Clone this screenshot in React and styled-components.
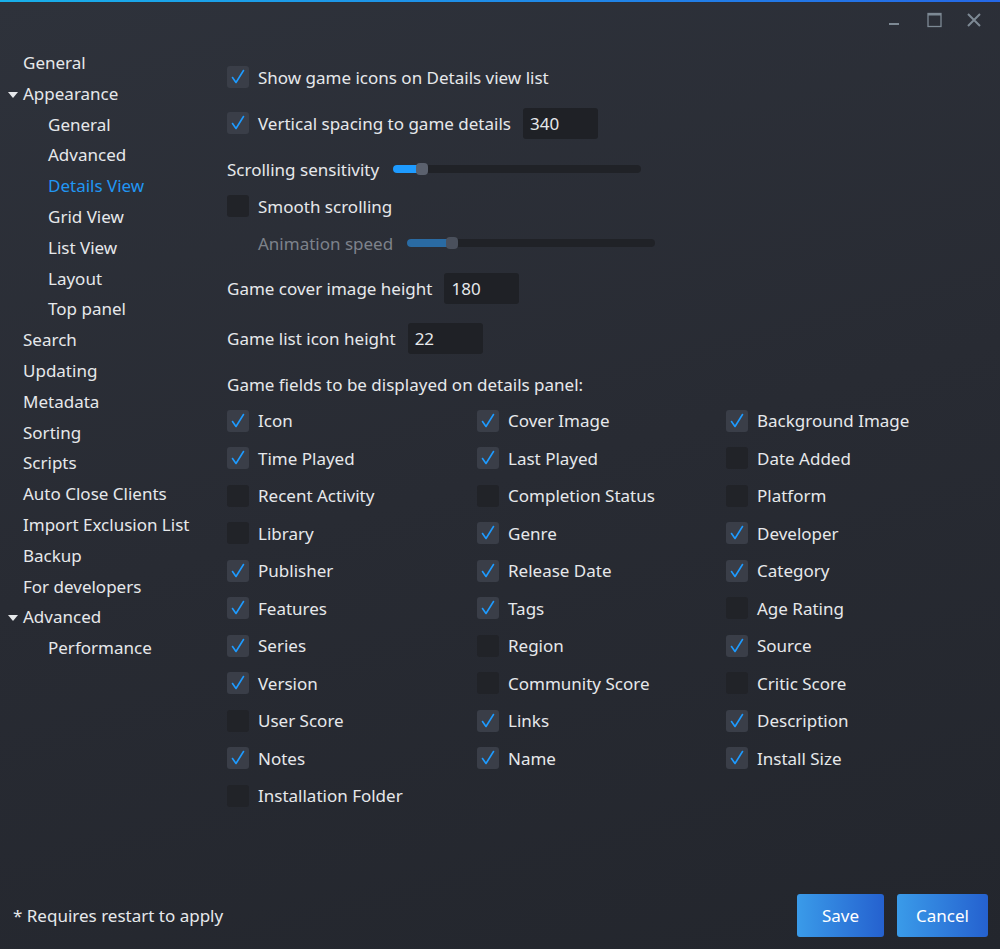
import React from 'react'
import styled, { createGlobalStyle } from 'styled-components'

const GlobalStyle = createGlobalStyle`
  html, body { margin:0; padding:0; }
  body {
    font-family: "Noto Sans", "Open Sans", sans-serif;
    background:#262930;
  }
`

const nav = [
  { label: 'General', level: 0 },
  { label: 'Appearance', level: 0, open: true },
  { label: 'General', level: 1 },
  { label: 'Advanced', level: 1 },
  { label: 'Details View', level: 1, active: true },
  { label: 'Grid View', level: 1 },
  { label: 'List View', level: 1 },
  { label: 'Layout', level: 1 },
  { label: 'Top panel', level: 1 },
  { label: 'Search', level: 0 },
  { label: 'Updating', level: 0 },
  { label: 'Metadata', level: 0 },
  { label: 'Sorting', level: 0 },
  { label: 'Scripts', level: 0 },
  { label: 'Auto Close Clients', level: 0 },
  { label: 'Import Exclusion List', level: 0 },
  { label: 'Backup', level: 0 },
  { label: 'For developers', level: 0 },
  { label: 'Advanced', level: 0, open: true },
  { label: 'Performance', level: 1 },
]

const fields = [
  ['Icon', true], ['Cover Image', true], ['Background Image', true],
  ['Time Played', true], ['Last Played', true], ['Date Added', false],
  ['Recent Activity', false], ['Completion Status', false], ['Platform', false],
  ['Library', false], ['Genre', true], ['Developer', true],
  ['Publisher', true], ['Release Date', true], ['Category', true],
  ['Features', true], ['Tags', true], ['Age Rating', false],
  ['Series', true], ['Region', false], ['Source', true],
  ['Version', true], ['Community Score', false], ['Critic Score', false],
  ['User Score', false], ['Links', true], ['Description', true],
  ['Notes', true], ['Name', true], ['Install Size', true],
  ['Installation Folder', false],
]

const Check = ({ checked }) => (
  <Box $checked={checked}>
    {checked && (
      <svg width="22" height="22" viewBox="0 0 22 22">
        <path d="M5.5 11.5 L9 16.5 L16.5 4.5" fill="none" stroke="#1e9bff" strokeWidth="1.6" strokeLinecap="round" strokeLinejoin="round" />
      </svg>
    )}
  </Box>
)

const Slider = ({ value, disabled }) => (
  <Track $disabled={disabled}>
    <Fill $disabled={disabled} style={{ width: value }} />
    <Thumb $disabled={disabled} />
  </Track>
)

const App = () => {
  return (
    <Window>
      <GlobalStyle />
      <TopLine />
      <TitleBar>
        <Ctrl>
          <svg width="14" height="14" viewBox="0 0 14 14"><rect x="2" y="10" width="10" height="2" fill="#7d8994" /></svg>
        </Ctrl>
        <Ctrl>
          <svg width="16" height="16" viewBox="0 0 16 16"><rect x="2" y="1.5" width="13" height="13" fill="none" stroke="#7d8994" strokeWidth="1.3" /><rect x="2" y="1" width="13" height="2.5" fill="#7d8994" /></svg>
        </Ctrl>
        <Ctrl>
          <svg width="16" height="16" viewBox="0 0 16 16"><path d="M2 2 L14 14 M14 2 L2 14" stroke="#7d8994" strokeWidth="2" /></svg>
        </Ctrl>
      </TitleBar>
      <Body>
        <Sidebar>
          {nav.map((n, i) => (
            <NavItem key={i} $level={n.level} $active={n.active}>
              {n.open && <Caret />}
              {n.label}
            </NavItem>
          ))}
        </Sidebar>
        <Content>
          <Row $h={32} $mt={14}>
            <Check checked />
            <Label>Show game icons on Details view list</Label>
          </Row>
          <Row $h={32} $mt={14}>
            <Check checked />
            <Label>Vertical spacing to game details</Label>
            <Input>340</Input>
          </Row>
          <Row $h={24} $mt={18}>
            <Text>Scrolling sensitivity</Text>
            <Slider value={29} />
          </Row>
          <Row $h={24} $mt={13}>
            <Check />
            <Label>Smooth scrolling</Label>
          </Row>
          <Row $h={24} $mt={13} $indent={31}>
            <Text $dim>Animation speed</Text>
            <Slider value={45} disabled />
          </Row>
          <Row $h={32} $mt={17}>
            <Text>Game cover image height</Text>
            <Input>180</Input>
          </Row>
          <Row $h={32} $mt={18}>
            <Text>Game list icon height</Text>
            <Input>22</Input>
          </Row>
          <Row $h={24} $mt={18}>
            <Text>Game fields to be displayed on details panel:</Text>
          </Row>
          <Grid>
            {fields.map(([label, on]) => (
              <Cell key={label}>
                <Check checked={on} />
                <Label>{label}</Label>
              </Cell>
            ))}
          </Grid>
        </Content>
      </Body>
      <Footer>
        <Note>* Requires restart to apply</Note>
        <Buttons>
          <Button $w={87}>Save</Button>
          <Button $w={91}>Cancel</Button>
        </Buttons>
      </Footer>
    </Window>
  )
}

const Window = styled.div`
  width:1000px;
  height:949px;
  display:flex;
  flex-direction:column;
  background:linear-gradient(165deg, #2e323b 0%, #282b33 50%, #23262d 100%);
  color:#e6e8eb;
  font-size:17px;
  overflow:hidden;
`
const TopLine = styled.div`
  height:2px;
  background:linear-gradient(90deg, #18b0ea, #2568e6);
`
const TitleBar = styled.div`
  height:36px;
  display:flex;
  justify-content:flex-end;
  align-items:center;
  gap:24px;
  padding-right:18px;
`
const Ctrl = styled.div`
  width:16px;
  height:16px;
  display:flex;
  align-items:center;
  justify-content:center;
`
const Body = styled.div`
  flex:1;
  display:flex;
`
const Sidebar = styled.div`
  width:227px;
  padding-top:10px;
  display:flex;
  flex-direction:column;
`
const NavItem = styled.div`
  position:relative;
  height:30.8px;
  line-height:30.8px;
  padding-left:${p => p.$level ? 48 : 23}px;
  color:${p => p.$active ? '#2196f3' : '#e6e8eb'};
  white-space:nowrap;
`
const Caret = styled.span`
  position:absolute;
  left:8px;
  top:13px;
  width:0;
  height:0;
  border-left:5px solid transparent;
  border-right:5px solid transparent;
  border-top:6px solid #e6e8eb;
`
const Content = styled.div`
  flex:1;
  padding-top:9px;
  display:flex;
  flex-direction:column;
`
const Row = styled.div`
  height:${p => p.$h}px;
  margin-top:${p => p.$mt}px;
  padding-left:${p => p.$indent || 0}px;
  display:flex;
  align-items:center;
`
const Box = styled.div`
  width:22px;
  height:22px;
  border-radius:3px;
  flex:none;
  background:${p => p.$checked ? '#3a3e48' : '#212328'};
  display:flex;
`
const Label = styled.span`
  margin-left:9px;
  white-space:nowrap;
`
const Text = styled.span`
  white-space:nowrap;
  color:${p => p.$dim ? '#7d828b' : '#e6e8eb'};
`
const Input = styled.div`
  width:75px;
  height:31px;
  box-sizing:border-box;
  margin-left:12px;
  padding-left:7px;
  border-radius:3px;
  background:#1f2126;
  line-height:31px;
`
const Track = styled.div`
  position:relative;
  width:248px;
  height:8px;
  margin-left:14px;
  border-radius:4px;
  background:#202227;
  display:flex;
  align-items:center;
`
const Fill = styled.div`
  height:8px;
  border-radius:4px;
  background:${p => p.$disabled ? '#2a6ba3' : '#1e9bff'};
`
const Thumb = styled.div`
  width:12px;
  height:12px;
  margin-left:-6px;
  border-radius:4px;
  background:${p => p.$disabled ? '#4a505c' : '#5b616e'};
`
const Grid = styled.div`
  margin-top:6px;
  display:grid;
  grid-template-columns:250px 249px 250px;
  grid-auto-rows:37.5px;
`
const Cell = styled.div`
  display:flex;
  align-items:center;
`
const Footer = styled.div`
  height:78px;
  display:flex;
  align-items:flex-start;
  justify-content:space-between;
  padding:23px 12px 0 13px;
  box-sizing:border-box;
`
const Note = styled.span`
  margin-top:10px;
  white-space:nowrap;
`
const Buttons = styled.div`
  display:flex;
  gap:13px;
`
const Button = styled.button`
  width:${p => p.$w}px;
  height:43px;
  border:none;
  border-radius:3px;
  background:linear-gradient(90deg, #3a9be9, #2561cf);
  color:#fff;
  font-family:inherit;
  font-size:17px;
`

export default App
